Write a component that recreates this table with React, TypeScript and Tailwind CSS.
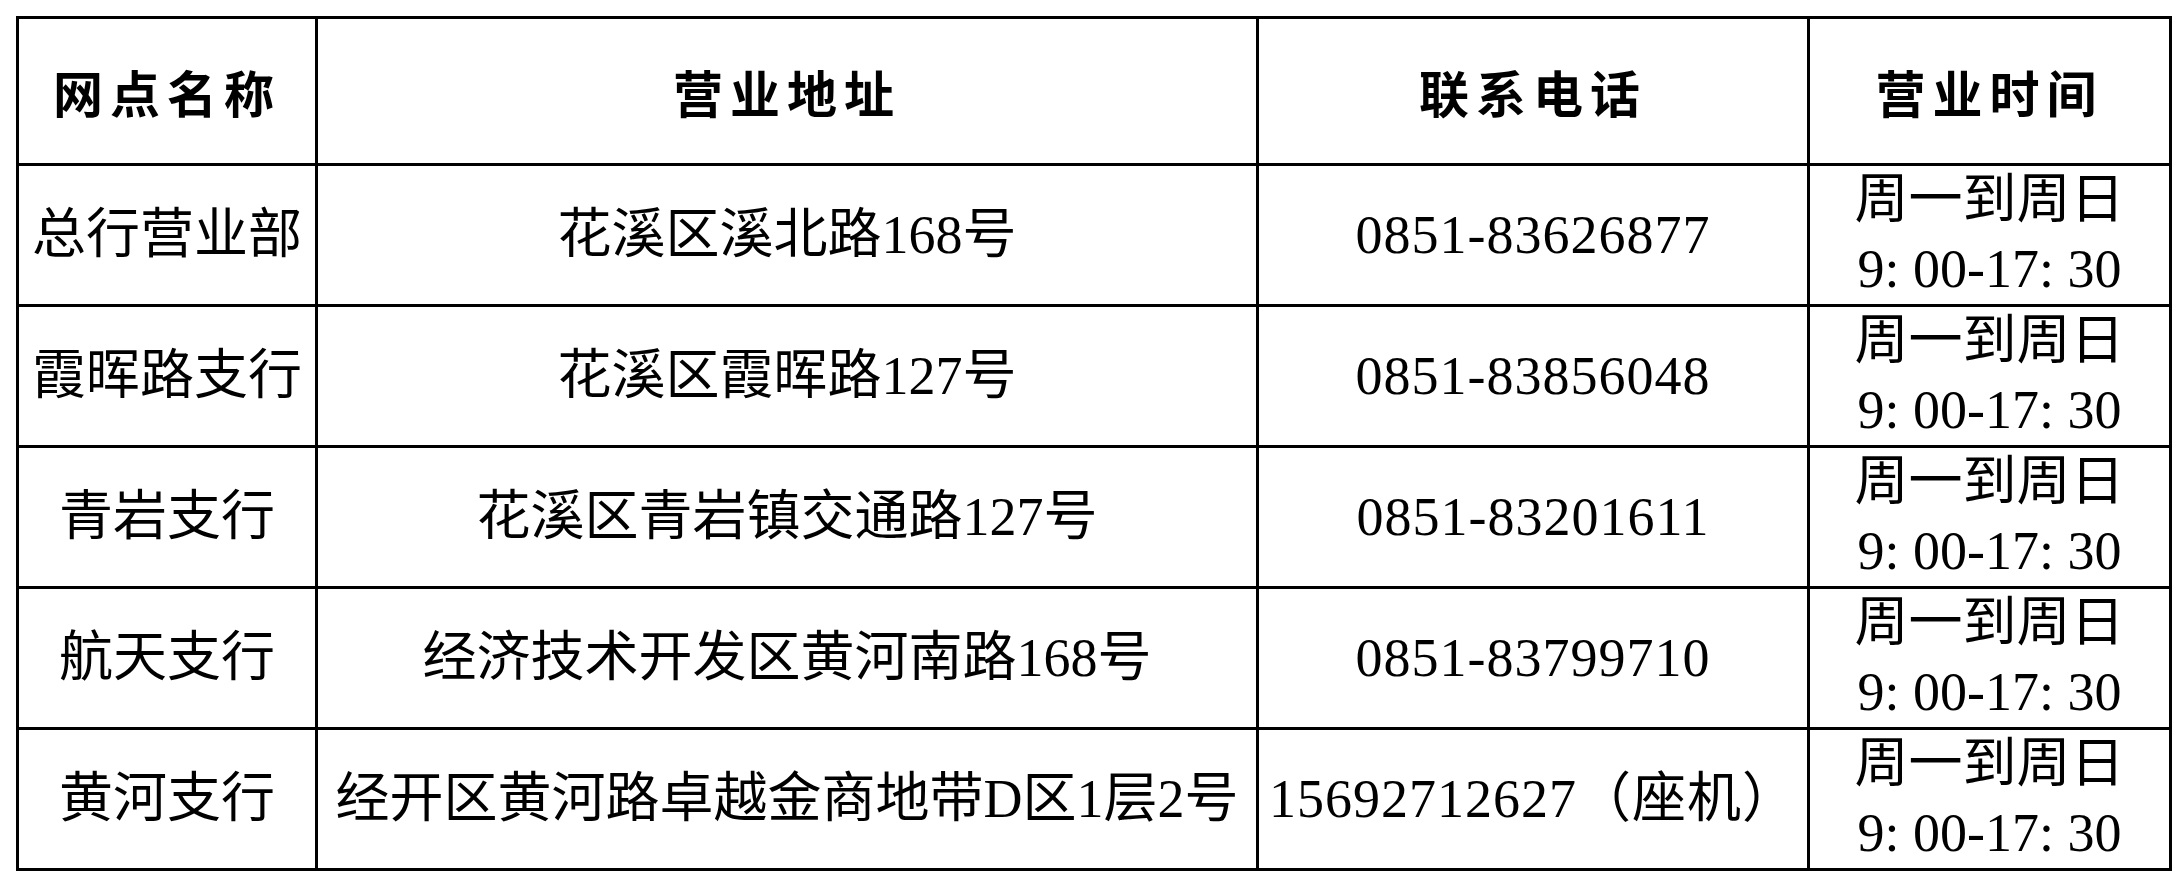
const rows = [
  { name: '总行营业部', addr: '花溪区溪北路168号', tel: '0851-83626877' },
  { name: '霞晖路支行', addr: '花溪区霞晖路127号', tel: '0851-83856048' },
  { name: '青岩支行', addr: '花溪区青岩镇交通路127号', tel: '0851-83201611' },
  { name: '航天支行', addr: '经济技术开发区黄河南路168号', tel: '0851-83799710' },
  { name: '黄河支行', addr: '经开区黄河路卓越金商地带D区1层2号', tel: '15692712627（座机）' },
];

const heads = ['网点名称', '营业地址', '联系电话', '营业时间'];

export default function App() {
  return (
    <div className="w-[2184px] h-[880px] bg-white pt-[16px] pl-[16px]">
      <table className="table-fixed border-collapse w-[2153px] text-black font-['Liberation_Serif','Noto_Sans_CJK_SC',serif]">
        <colgroup>
          <col className="w-[299px]" />
          <col className="w-[941px]" />
          <col className="w-[551px]" />
          <col className="w-[362px]" />
        </colgroup>
        <thead>
          <tr className="h-[147px]">
            {heads.map((h) => (
              <th
                key={h}
                className="border-[3px] border-black p-0 text-center align-middle font-bold text-[50px] tracking-[7px] font-['Noto_Sans_CJK_SC',sans-serif]"
              >
                {h}
              </th>
            ))}
          </tr>
        </thead>
        <tbody>
          {rows.map((r) => (
            <tr key={r.name} className="h-[140px] text-[54px] leading-[69px]">
              <td className="border-[3px] border-black p-0 text-center align-middle whitespace-nowrap">{r.name}</td>
              <td className="border-[3px] border-black p-0 text-center align-middle whitespace-nowrap">{r.addr}</td>
              <td className="border-[3px] border-black p-0 text-center align-middle whitespace-nowrap tracking-[1px]">{r.tel}</td>
              <td className="border-[3px] border-black p-0 text-center align-middle whitespace-nowrap">
                <div>周一到周日</div>
                <div>9: 00-17: 30</div>
              </td>
            </tr>
          ))}
        </tbody>
      </table>
    </div>
  );
}
